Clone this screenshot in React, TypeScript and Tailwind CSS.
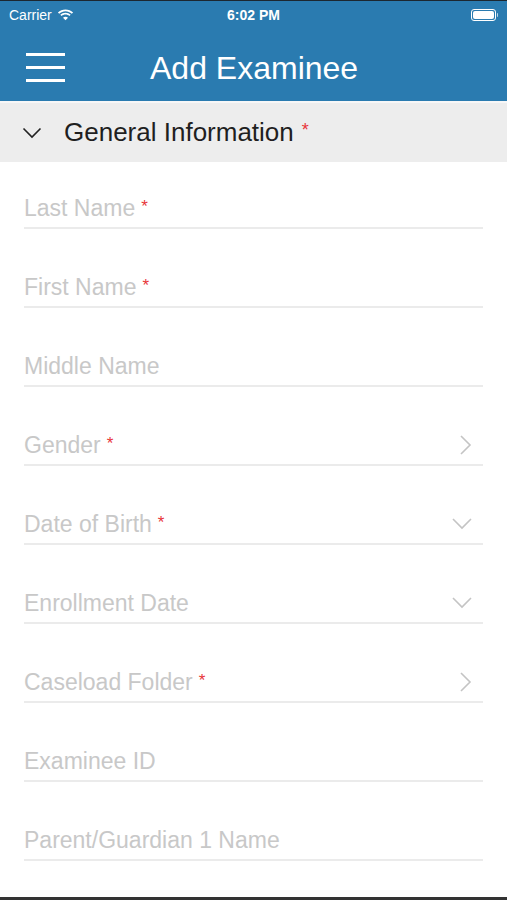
import React from "react";

type Field = {
  label: string;
  required?: boolean;
  icon?: "right" | "down";
};

const FIELDS: Field[] = [
  { label: "Last Name", required: true },
  { label: "First Name", required: true },
  { label: "Middle Name" },
  { label: "Gender", required: true, icon: "right" },
  { label: "Date of Birth", required: true, icon: "down" },
  { label: "Enrollment Date", icon: "down" },
  { label: "Caseload Folder", required: true, icon: "right" },
  { label: "Examinee ID" },
  { label: "Parent/Guardian 1 Name" },
];

const font = { fontFamily: '"Liberation Sans", Arial, sans-serif' };

function StatusBar() {
  return (
    <div className="relative flex h-[28px] items-center px-[9px] text-[14px] text-white">
      <div className="flex items-center gap-[5px]">
        <span>Carrier</span>
        <svg width="17" height="12" viewBox="0 0 17 12" fill="white">
          <path d="M8.5 2.2c2.4 0 4.6.9 6.3 2.5l1.3-1.3C14.1 1.5 11.4.4 8.5.4S2.9 1.5.9 3.4l1.3 1.3C3.9 3.1 6.1 2.2 8.5 2.2z" />
          <path d="M8.5 5.6c1.5 0 2.8.5 3.9 1.5l1.3-1.3C12.3 4.5 10.5 3.8 8.5 3.8s-3.8.7-5.2 2l1.3 1.3c1.1-1 2.4-1.5 3.9-1.5z" />
          <path d="M8.5 9.2 11 6.7c-.7-.6-1.5-.9-2.5-.9s-1.8.3-2.5.9z" transform="translate(0 2)" />
        </svg>
      </div>
      <span className="absolute left-1/2 -translate-x-1/2 font-semibold">6:02 PM</span>
      <div className="ml-auto flex items-center">
        <div className="flex h-[12px] w-[25px] items-center rounded-[3px] border border-white p-[1px]">
          <div className="h-full w-full rounded-[2px] bg-white" />
        </div>
        <div className="ml-[1px] h-[4px] w-[1.5px] rounded-r bg-white/70" />
      </div>
    </div>
  );
}

function Chevron({ dir }: { dir: "right" | "down" }) {
  if (dir === "right") {
    return (
      <svg width="14" height="22" viewBox="0 0 14 22" fill="none" stroke="#c4c4c4" strokeWidth="1.6">
        <path d="M2 2l9 9-9 9" />
      </svg>
    );
  }
  return (
    <svg width="22" height="14" viewBox="0 0 22 14" fill="none" stroke="#c4c4c4" strokeWidth="1.6">
      <path d="M2 2l9 9 9-9" />
    </svg>
  );
}

export default function App() {
  return (
    <div className="flex h-[900px] w-[507px] flex-col overflow-hidden bg-white" style={font}>
      <div className="h-[1px] bg-[#1c2730]" />
      <header className="bg-[#2a7bb0]">
        <StatusBar />
        <div className="flex h-[72px] items-center pt-[5px]">
          <div className="ml-[26px] flex w-[39px] flex-col gap-[10px]">
            <div className="h-[3px] bg-white" />
            <div className="h-[3px] bg-white" />
            <div className="h-[3px] bg-white" />
          </div>
          <h1 className="ml-[85px] text-[32px] font-light text-white">Add Examinee</h1>
        </div>
      </header>
      <div className="h-[2px] bg-[#f7f7f7]" />
      <div className="flex h-[59px] items-center bg-[#ededed]">
        <svg className="ml-[22px]" width="20" height="12" viewBox="0 0 20 12" fill="none" stroke="#222" strokeWidth="1.6">
          <path d="M1.5 1.5l8.5 8.5 8.5-8.5" />
        </svg>
        <span className="ml-[22px] text-[26px] text-[#1f1f1f]">General Information</span>
        <span className="ml-[8px] -mt-[4px] text-[18px] text-[#e8363a]">*</span>
      </div>
      <div className="flex flex-col px-[24px]">
        {FIELDS.map((f) => (
          <div key={f.label} className="flex h-[79px] items-end border-b-2 border-[#ebebeb] first:h-[67px]">
            <div className="mb-[4px] flex h-[30px] w-full items-center">
              <span className="text-[23px] text-[#c8c8c8]">{f.label}</span>
              {f.required && <span className="ml-[6px] -mt-[2px] text-[17px] text-[#e8363a]">*</span>}
              {f.icon && (
                <span className="ml-auto mr-[10px] flex items-center">
                  <Chevron dir={f.icon} />
                </span>
              )}
            </div>
          </div>
        ))}
      </div>
      <div className="mt-auto h-[3px] bg-[#333]" />
    </div>
  );
}
